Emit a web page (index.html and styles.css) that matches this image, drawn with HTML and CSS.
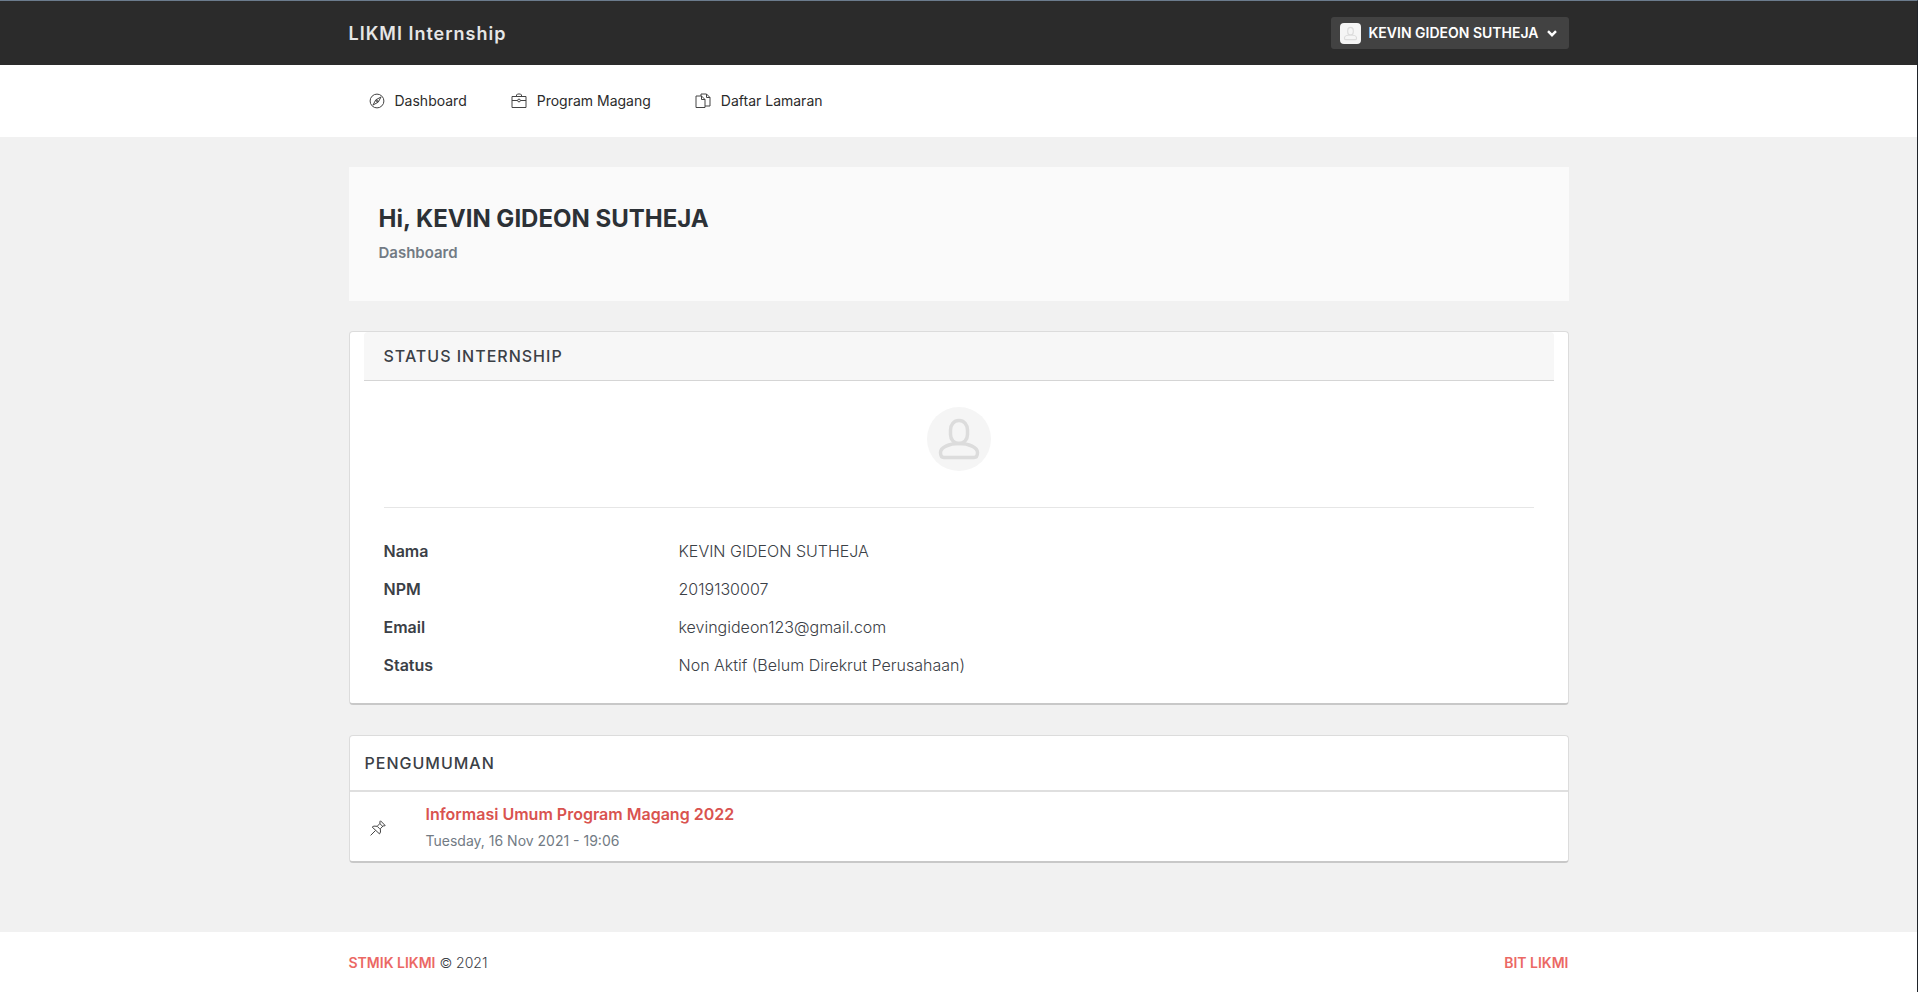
FILE: index.html
```html
<!DOCTYPE html>
<html lang="id">
<head>
<meta charset="utf-8">
<title>LIKMI Internship</title>
<meta name="viewport" content="width=device-width, initial-scale=1">
<link rel="stylesheet" href="styles.css">
</head>
<body>
<svg class="sprite" aria-hidden="true">
  <symbol id="person" viewBox="0 0 64 64">
    <path d="M32 13.500c-5.300 0-8.500 4.200-8.500 9.500v4.500c0 5 3.500 9 8.500 9s8.500-4 8.500-9V23c0-5.300-3.200-9.500-8.500-9.500z" fill="none" stroke="#dcdcdc" stroke-width="3.500"/>
    <path d="M32 36.500c-10 0-18.500 4-18.500 9 0 3.500 1 5 3.500 5h30c2.500 0 3.500-1.500 3.500-5 0-5-8.500-9-18.500-9z" fill="none" stroke="#dcdcdc" stroke-width="3.500"/>
  </symbol>
</svg>
<header class="topbar">
  <div class="container topbar-row">
    <a class="brand" href="#">LIKMI Internship</a>
    <button class="user" type="button">
      <svg class="user-photo" viewBox="0 0 64 64" aria-hidden="true"><use href="#person"/></svg>
      <span>KEVIN GIDEON SUTHEJA</span>
      <svg class="chevron" viewBox="0 0 10 7" aria-hidden="true"><path d="M1 1.200l4 4 4-4" fill="none" stroke="currentColor" stroke-width="2.400"/></svg>
    </button>
  </div>
</header>
<nav class="menu">
  <ul class="container menu-list">
    <li><a class="menu-link" href="#">
      <svg class="icon" viewBox="0 0 16 16" aria-hidden="true"><circle cx="8" cy="8" r="6.900"/><path d="M12 4L9.200 9.200 4 12l2.800-5.200z"/><circle cx="8" cy="8" r=".9"/></svg>
      Dashboard</a></li>
    <li><a class="menu-link" href="#">
      <svg class="icon" viewBox="0 0 16 16" aria-hidden="true"><path d="M1 3.500h14v11H1zM5.500 3.500V2l1-1h3l1 1v1.500M1 7.500h5.500M9.500 7.500H15"/><circle cx="8" cy="7.500" r="1.400"/></svg>
      Program Magang</a></li>
    <li><a class="menu-link" href="#">
      <svg class="icon" viewBox="0 0 16 16" aria-hidden="true"><path d="M1 3h5.500l3.500 3.500v8H1zM6.500 3v3.500H10M6 3V1h5.500L15 4.500V13h-5M11.500 1v3.500H15"/></svg>
      Daftar Lamaran</a></li>
  </ul>
</nav>
<main class="container content">
  <section class="hero">
    <h1 class="hero-title">Hi, KEVIN GIDEON SUTHEJA</h1>
    <p class="hero-sub">Dashboard</p>
  </section>
  <section class="card status">
    <h2 class="status-head">Status Internship</h2>
    <div class="status-body">
      <svg class="avatar" viewBox="0 0 64 64" aria-hidden="true"><use href="#person"/></svg>
      <hr class="rule">
      <dl class="details">
        <dt>Nama</dt><dd>KEVIN GIDEON SUTHEJA</dd>
        <dt>NPM</dt><dd>2019130007</dd>
        <dt>Email</dt><dd>kevingideon123@gmail.com</dd>
        <dt>Status</dt><dd>Non Aktif (Belum Direkrut Perusahaan)</dd>
      </dl>
    </div>
  </section>
  <section class="card">
    <h2 class="news-head">Pengumuman</h2>
    <article class="news-item">
      <svg class="pin" viewBox="0 0 16 16" aria-hidden="true"><path d="M10.500.800l4.700 4.700-1.200.500-.8-.2-2.900 3 .2 3.200-1 1.900L2.200 7.100l1.700-1 3.300.2 2.900-3-.3-1.400zM5.500 10.500L.600 15.400M7.200 6.300l2.500 2.500M9.800 3.500l2.800 2.800"/></svg>
      <div>
        <a class="news-title" href="#">Informasi Umum Program Magang 2022</a>
        <p class="news-date">Tuesday, 16 Nov 2021 - 19:06</p>
      </div>
    </article>
  </section>
</main>
<footer class="footer">
  <div class="container footer-row">
    <span><a class="footer-link" href="#">STMIK LIKMI</a> © 2021</span>
    <a class="footer-link" href="#">BIT LIKMI</a>
  </div>
</footer>
</body>
</html>
```
FILE: styles.css
```css
* { box-sizing: border-box; }

body {
  margin: 0;
  min-height: 100vh;
  display: flex;
  flex-direction: column;
  border-top: 1px solid #6b7b8d;
  border-right: 1px solid #20242a;
  background: #f1f1f1;
  color: #3b4046;
  font-family: Inter, "Liberation Sans", sans-serif;
  font-size: 16px;
  font-weight: 300;
  line-height: 24px;
}

h1, h2, p, ul, dl, dd { margin: 0; padding: 0; }
a { color: inherit; text-decoration: none; }

.sprite { display: none; }

.container {
  width: 100%;
  max-width: 1280px;
  margin: 0 auto;
  padding: 0 30px;
}

.topbar { background: #2b2b2b; }

.topbar-row {
  display: flex;
  align-items: center;
  justify-content: space-between;
  height: 64px;
}

.brand {
  padding-top: 2px;
  color: #e6e6e6;
  font-size: 18px;
  font-weight: 600;
  letter-spacing: 1px;
}

.user {
  display: flex;
  align-items: center;
  gap: 8px;
  height: 32px;
  padding: 0 12px 0 9px;
  border: 0;
  border-radius: 3px;
  background: #424242;
  color: #fff;
  font: 600 14px/20px Inter, "Liberation Sans", sans-serif;
}

.user-photo {
  width: 21px;
  height: 21px;
  border-radius: 4px;
  background: #f5f5f5;
}

.chevron { width: 10px; height: 7px; }

.menu { background: #fff; }

.menu-list {
  display: flex;
  gap: 4px;
  padding-top: 16px;
  padding-bottom: 16px;
  list-style: none;
}

.menu-link {
  display: flex;
  align-items: center;
  gap: 10px;
  height: 40px;
  padding: 0 20px;
  color: #2b2b2b;
  font-size: 14px;
  font-weight: 400;
}

.icon, .pin {
  width: 16px;
  height: 16px;
  fill: none;
  stroke: #444;
  stroke-width: 1;
}

.content {
  flex: 1;
  display: flex;
  flex-direction: column;
  gap: 30px;
  padding-top: 30px;
  padding-bottom: 30px;
}

.hero {
  padding: 34px 30px 36px;
  background: #fafafa;
}

.hero-title {
  color: #2c3136;
  font-size: 24px;
  font-weight: 700;
  line-height: 36px;
}

.hero-sub {
  padding-top: 4px;
  color: #727b84;
  font-size: 15px;
  font-weight: 600;
}

.card {
  border: 1px solid #dcdcdc;
  border-bottom: 2px solid #c8c8c8;
  border-radius: 4px;
  background: #fff;
}

.status { padding: 0 14px; }

.status-head, .news-head {
  color: #3b4046;
  font-size: 16px;
  font-weight: 500;
  letter-spacing: 1px;
  text-transform: uppercase;
}

.status-head {
  padding: 12px 20px;
  border-bottom: 1px solid #d5d5d5;
  border-radius: 4px 4px 0 0;
  background: #f7f7f7;
}

.status-body { padding: 26px 20px 19px; }

.avatar {
  display: block;
  width: 64px;
  height: 64px;
  margin: 0 auto;
  border-radius: 50%;
  background: #f5f5f5;
}

.rule {
  margin: 36px 0 24px;
  border: 0;
  border-top: 1px solid #e6e6e6;
}

.details {
  display: grid;
  grid-template-columns: 1fr 3fr;
  column-gap: 10px;
}

.details dt, .details dd { padding: 7px 0; }
.details dt { font-weight: 600; }

.news-head {
  padding: 15px;
  border-bottom: 2px solid #dfdfdf;
}

.news-item {
  display: grid;
  grid-template-columns: 36px 1fr;
  align-items: center;
  column-gap: 20px;
  padding: 10px 20px 8px;
}

.news-title {
  display: block;
  padding-bottom: 3px;
  color: #d9534f;
  font-weight: 600;
}

.news-date {
  color: #727b84;
  font-size: 14px;
  font-weight: 400;
}

.footer { background: #fff; }

.footer-row {
  display: flex;
  align-items: center;
  justify-content: space-between;
  height: 60px;
  padding-top: 2px;
  font-size: 14px;
}

.footer-link { color: #eb6864; font-weight: 600; }
```
